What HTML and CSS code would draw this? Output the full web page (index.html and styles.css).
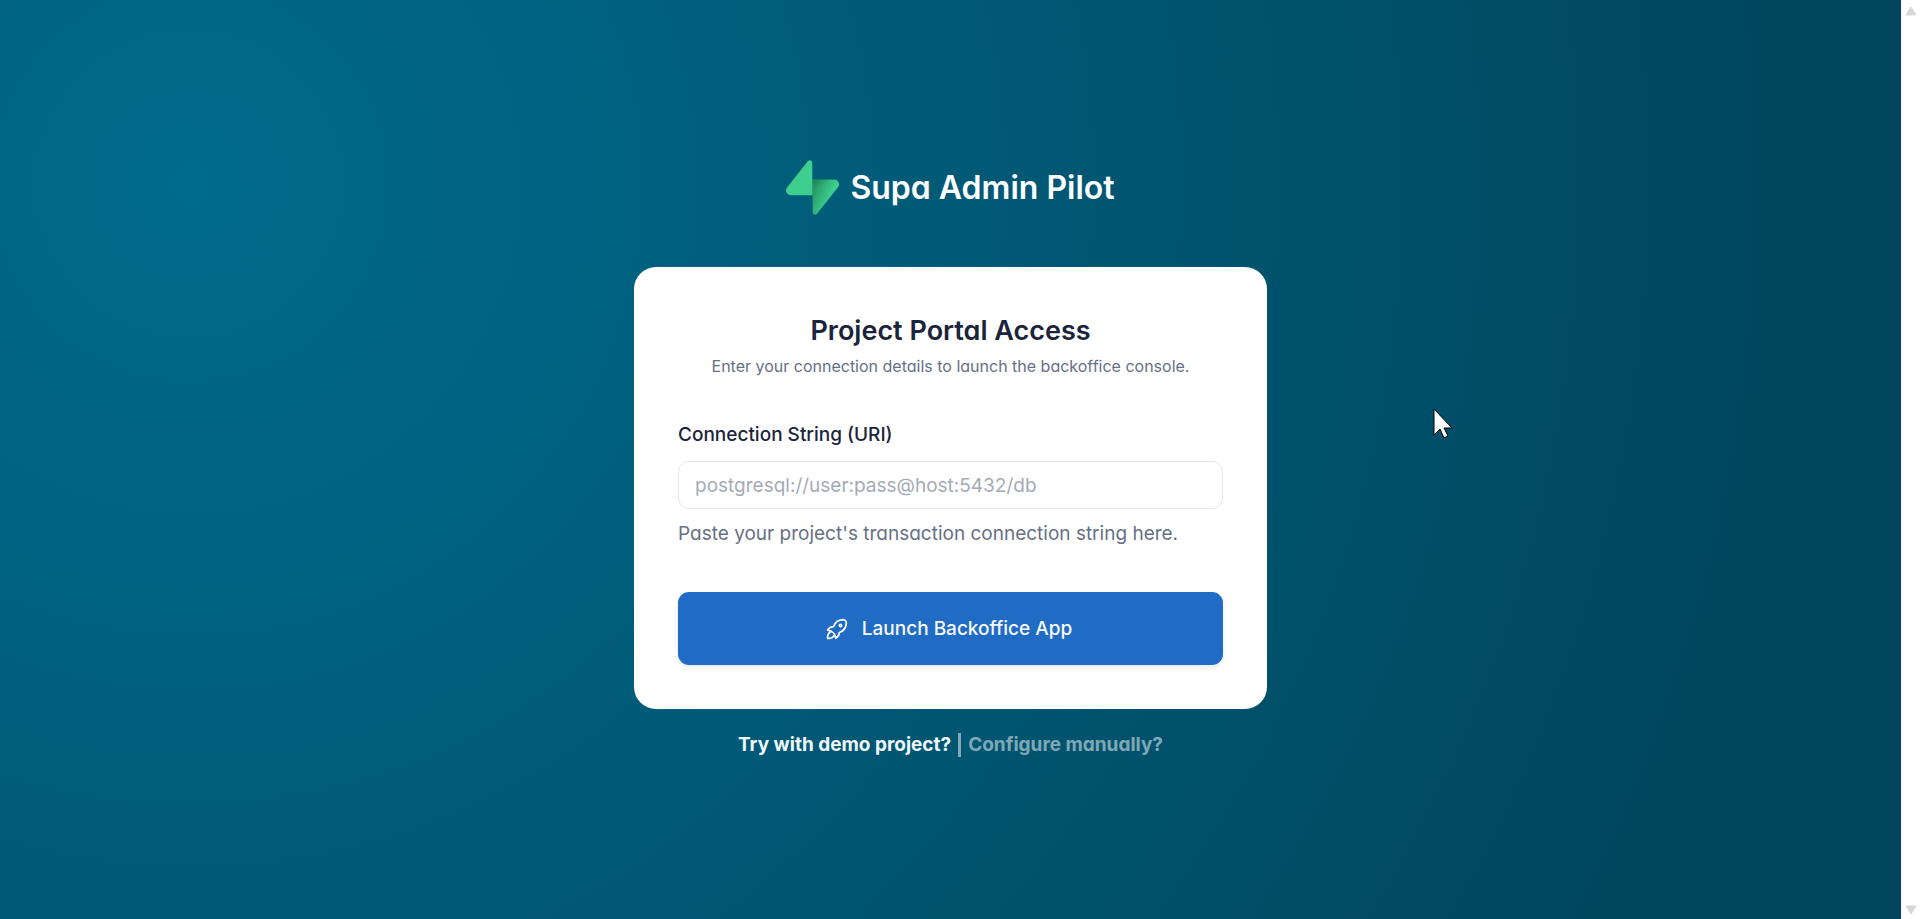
FILE: index.html
```html
<!DOCTYPE html>
<html lang="en">
<head>
<meta charset="utf-8">
<title>Supa Admin Pilot</title>
<link rel="stylesheet" href="styles.css">
</head>
<body>
<div class="page">
  <main class="portal">
    <header class="brand">
      <svg class="brand-logo" viewBox="0 0 109 113" aria-hidden="true">
        <defs>
          <linearGradient id="bolt-base" x1="53.97" y1="54.97" x2="94.16" y2="71.83" gradientUnits="userSpaceOnUse">
            <stop stop-color="#249361"/><stop offset="1" stop-color="#3ecf8e"/>
          </linearGradient>
          <linearGradient id="bolt-shade" x1="36.16" y1="30.58" x2="54.48" y2="65.08" gradientUnits="userSpaceOnUse">
            <stop/><stop offset="1" stop-opacity="0"/>
          </linearGradient>
        </defs>
        <path d="M63.7 110.3c-2.9 3.6-8.7 1.6-8.7-3L54 40h45.200c8.200 0 12.800 9.500 7.700 15.900z" fill="url(#bolt-base)"/>
        <path d="M63.700 110.300c-2.900 3.600-8.700 1.600-8.700-3L54 40h45.200c8.200 0 12.800 9.500 7.700 15.900z" fill="url(#bolt-shade)" fill-opacity=".2"/>
        <path d="M45.300 2.100c2.900-3.600 8.700-1.600 8.700 3l.4 67.200H9.800C1.600 72.300-3 62.800 2.100 56.400z" fill="#3ecf8e"/>
      </svg>
      <span class="brand-name">Supa Admin Pilot</span>
    </header>

    <form class="card">
      <h1 class="card-title">Project Portal Access</h1>
      <p class="card-subtitle">Enter your connection details to launch the backoffice console.</p>
      <label class="field-label" for="uri">Connection String (URI)</label>
      <input class="field-input" id="uri" type="text" placeholder="postgresql://user:pass@host:5432/db" aria-describedby="uri-hint">
      <p class="field-hint" id="uri-hint">Paste your project's transaction connection string here.</p>
      <button class="launch" type="button">
        <svg class="launch-icon" viewBox="0 0 24 24" aria-hidden="true">
          <path d="M4 13a8 8 0 0 1 7 7a6 6 0 0 0 3-5a9 9 0 0 0 6-8a3 3 0 0 0-3-3a9 9 0 0 0-8 6a6 6 0 0 0-5 3"/>
          <path d="M7 14a6 6 0 0 0-3 6a6 6 0 0 0 6-3"/>
          <circle cx="15" cy="9" r="1"/>
        </svg>
        Launch Backoffice App
      </button>
    </form>

    <nav class="alternatives">
      <a class="alt-link" href="#demo">Try with demo project?</a>
      <span class="divider"></span>
      <a class="alt-link alt-link-muted" href="#manual">Configure manually?</a>
    </nav>
  </main>
  <div class="scrollbar" aria-hidden="true">
    <svg class="scroll-arrow" viewBox="0 0 12 10"><path d="M6 1 11 9H1z"/></svg>
    <svg class="scroll-arrow" viewBox="0 0 12 10"><path d="M1 1h10L6 9z"/></svg>
  </div>
</div>
<svg class="pointer" viewBox="0 0 20 32" aria-hidden="true">
  <path d="M1 1v26l6-6 4 9 4-2-4-8h8z"/>
</svg>
</body>
</html>
```

FILE: styles.css
```css
* { box-sizing: border-box; }

body {
  margin: 0;
  font-family: Inter, "Liberation Sans", sans-serif;
  font-size: 19px;
  font-optical-sizing: none;
  line-height: 28px;
  color: #1a243a;
}

.page {
  display: flex;
  min-height: 100vh;
}

.portal {
  flex: 1;
  display: flex;
  flex-direction: column;
  align-items: center;
  justify-content: center;
  background: radial-gradient(circle at 10% 20%, rgb(0, 107, 141) 0%, rgb(0, 69, 91) 90%);
  font-feature-settings: "cv11";
}

.brand {
  display: flex;
  align-items: center;
  gap: 11px;
  margin-bottom: 52px;
}

.brand-logo {
  width: 53px;
  height: 55px;
}

.brand-name {
  color: #fff;
  font-size: 32px;
  font-weight: 600;
  line-height: 40px;
}

.card {
  display: flex;
  flex-direction: column;
  width: 100%;
  max-width: 633px;
  padding: 44px;
  border-radius: 22px;
  background: #fff;
}

.card-title {
  margin: 0;
  font-size: 27px;
  font-weight: 600;
  line-height: 40px;
  text-align: center;
}

.card-subtitle {
  margin: 3px 0 43px;
  color: #667085;
  font-size: 16px;
  line-height: 24px;
  text-align: center;
}

.field-label {
  margin-bottom: 12px;
  font-weight: 500;
}

.field-input {
  height: 48px;
  padding: 0 16px;
  border: 1px solid #e5e7eb;
  border-radius: 11px;
  background: #fff;
  color: inherit;
  font: inherit;
  font-feature-settings: normal;
}

.field-input::placeholder { color: #a5abb6; }

.field-hint {
  margin: 11px 0 44px;
  color: #667085;
}

.launch {
  display: flex;
  align-items: center;
  justify-content: center;
  gap: 11px;
  height: 73px;
  padding: 0 12px 0 6px;
  border: 0;
  border-radius: 11px;
  background: #206bc4;
  box-shadow: 0 2px 5px rgba(26, 36, 58, 0.1);
  color: #f8fafc;
  font: inherit;
  font-weight: 500;
  font-feature-settings: normal;
}

.launch-icon {
  width: 28px;
  height: 28px;
  fill: none;
  stroke: currentColor;
  stroke-width: 1.5;
  stroke-linecap: round;
  stroke-linejoin: round;
}

.alternatives {
  display: flex;
  align-items: center;
  gap: 7px;
  margin-top: 22px;
  font-weight: 700;
}

.alt-link {
  color: #f0f6fa;
  text-decoration: none;
}

.alt-link-muted { color: #80a8b6; }

.divider {
  width: 3px;
  height: 24px;
  background: #80a8b6;
}

.scrollbar {
  display: flex;
  flex-direction: column;
  align-items: center;
  justify-content: space-between;
  width: 19px;
  padding: 6px 0 4px;
  background: #fff;
}

.scroll-arrow {
  width: 12px;
  height: 10px;
  fill: #d6d7da;
  stroke: #d6d7da;
  stroke-linejoin: round;
}

.pointer {
  position: absolute;
  left: 1433px;
  top: 408px;
  width: 20px;
  height: 32px;
  fill: #fff;
  stroke: #000;
}
```
